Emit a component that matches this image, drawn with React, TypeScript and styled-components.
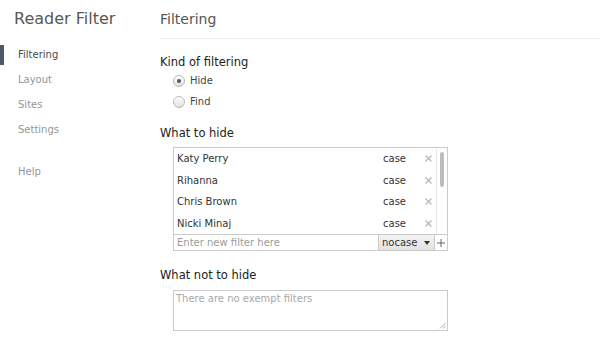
import styled, { createGlobalStyle } from "styled-components";

const GlobalStyle = createGlobalStyle`
    html, body {
        margin: 0;
        padding: 0;
        background: #fff;
    }
    body {
        font-family: "DejaVu Sans", "Open Sans", sans-serif;
        font-size: 10px;
        color: #333;
    }
`;

const filters = [
    { text: "Katy Perry", mode: "case" },
    { text: "Rihanna", mode: "case" },
    { text: "Chris Brown", mode: "case" },
    { text: "Nicki Minaj", mode: "case" },
];

const Page = styled.div`
    display: flex;
    width: 600px;
    height: 342px;
    overflow: hidden;
`;

const Sidebar = styled.nav`
    width: 160px;
    flex-shrink: 0;
    padding-top: 9px;
`;

const AppTitle = styled.h1`
    margin: 0 0 0 14px;
    font-size: 16px;
    font-weight: normal;
    color: #585858;
    line-height: 20px;
`;

const NavList = styled.ul`
    list-style: none;
    margin: 13px 0 0;
    padding: 0;
`;

const NavItem = styled.li<{ $active?: boolean; $gap?: boolean }>`
    position: relative;
    padding-left: 18px;
    height: 25px;
    line-height: 25px;
    margin-top: ${(p) => (p.$gap ? "17px" : "0")};
    color: ${(p) => (p.$active ? "#4a4a4a" : "#959595")};

    &::before {
        content: "";
        display: ${(p) => (p.$active ? "block" : "none")};
        position: absolute;
        left: 0;
        top: 3px;
        width: 4px;
        height: 20px;
        background: #4f5966;
    }
`;

const Main = styled.main`
    flex: 1;
    padding-top: 9px;
`;

const PageHeader = styled.h2`
    margin: 0;
    font-size: 14px;
    font-weight: normal;
    color: #555;
    line-height: 20px;
    padding-bottom: 9px;
    border-bottom: 1px solid #eeeeee;
`;

const Section = styled.section<{ $space: number }>`
    margin-top: ${(p) => p.$space}px;
`;

const SectionTitle = styled.h3<{ $below: number }>`
    margin: 0 0 ${(p) => p.$below}px;
    font-size: 11.5px;
    font-weight: normal;
    color: #222;
    line-height: 14px;
`;

const RadioRow = styled.label`
    display: flex;
    align-items: center;
    gap: 5px;
    margin-left: 13px;
    height: 21px;
    color: #444;
`;

const Radio = styled.span<{ $checked?: boolean }>`
    width: 10px;
    height: 10px;
    border-radius: 50%;
    border: 1px solid #b8b8b8;
    background: linear-gradient(#ffffff, #e2e2e2);
    display: flex;
    align-items: center;
    justify-content: center;

    &::after {
        content: "";
        display: ${(p) => (p.$checked ? "block" : "none")};
        width: 4px;
        height: 4px;
        border-radius: 50%;
        background: #555;
    }
`;

const ListBox = styled.div`
    margin-left: 13px;
    width: 273px;
    border: 1px solid #cacaca;
`;

const ListBody = styled.div`
    display: flex;
    height: 86px;
    overflow: hidden;
`;

const Rows = styled.div`
    flex: 1;
`;

const Row = styled.div`
    display: flex;
    align-items: center;
    height: 21.5px;
    padding-left: 3px;
    color: #333;
`;

const RowText = styled.span`
    flex: 1;
`;

const RowMode = styled.span`
    width: 37px;
    padding-left: 2px;
`;

const RemoveBtn = styled.span`
    width: 16px;
    display: flex;
    justify-content: center;
`;

const Scrollbar = styled.div`
    width: 11px;
    border-left: 1px solid #e8e8e8;
    padding: 4px 0 0 3px;
    box-sizing: border-box;
`;

const Thumb = styled.div`
    width: 4px;
    height: 35px;
    border-radius: 2px;
    background: #bdbdbd;
`;

const AddRow = styled.div`
    display: flex;
    height: 15px;
    border-top: 1px solid #cacaca;
`;

const NewInput = styled.div`
    flex: 1;
    color: #9a9a9a;
    padding-left: 3px;
    line-height: 15px;
`;

const ModeSelect = styled.div`
    display: flex;
    align-items: center;
    justify-content: space-between;
    width: 57px;
    padding: 0 4px 0 3px;
    box-sizing: border-box;
    background: linear-gradient(#f4f4f4, #e2e2e2);
    border-left: 1px solid #cacaca;
    border-right: 1px solid #cacaca;
    color: #333;
`;

const Caret = styled.span`
    width: 0;
    height: 0;
    border-left: 3px solid transparent;
    border-right: 3px solid transparent;
    border-top: 4px solid #333;
`;

const AddBtn = styled.div`
    width: 12px;
    display: flex;
    align-items: center;
    justify-content: center;
`;

const TextArea = styled.div`
    position: relative;
    margin-left: 13px;
    width: 269px;
    height: 35px;
    border: 1px solid #cacaca;
    padding: 2px;
    line-height: 12px;
    color: #a8a8a8;
`;

const Grip = styled.svg`
    position: absolute;
    right: 1px;
    bottom: 1px;
`;

function Cross() {
    return (
        <svg width="7" height="7" viewBox="0 0 7 7">
            <path d="M0.5 0.5 L6.5 6.5 M6.5 0.5 L0.5 6.5" stroke="#b3b3b3" strokeWidth="1.1" />
        </svg>
    );
}

function Plus() {
    return (
        <svg width="8" height="8" viewBox="0 0 8 8">
            <path d="M4 0 V8 M0 4 H8" stroke="#666" strokeWidth="1" />
        </svg>
    );
}

export default function App() {
    return (
        <>
            <GlobalStyle />
            <Page>
                <Sidebar>
                    <AppTitle>Reader Filter</AppTitle>
                    <NavList>
                        <NavItem $active>Filtering</NavItem>
                        <NavItem>Layout</NavItem>
                        <NavItem>Sites</NavItem>
                        <NavItem>Settings</NavItem>
                        <NavItem $gap>Help</NavItem>
                    </NavList>
                </Sidebar>
                <Main>
                    <PageHeader>Filtering</PageHeader>
                    <Section $space={16}>
                        <SectionTitle $below={1}>Kind of filtering</SectionTitle>
                        <RadioRow>
                            <Radio $checked />
                            Hide
                        </RadioRow>
                        <RadioRow>
                            <Radio />
                            Find
                        </RadioRow>
                    </Section>
                    <Section $space={14}>
                        <SectionTitle $below={7}>What to hide</SectionTitle>
                        <ListBox>
                            <ListBody>
                                <Rows>
                                    {filters.map((f) => (
                                        <Row key={f.text}>
                                            <RowText>{f.text}</RowText>
                                            <RowMode>{f.mode}</RowMode>
                                            <RemoveBtn>
                                                <Cross />
                                            </RemoveBtn>
                                        </Row>
                                    ))}
                                </Rows>
                                <Scrollbar>
                                    <Thumb />
                                </Scrollbar>
                            </ListBody>
                            <AddRow>
                                <NewInput>Enter new filter here</NewInput>
                                <ModeSelect>
                                    nocase
                                    <Caret />
                                </ModeSelect>
                                <AddBtn>
                                    <Plus />
                                </AddBtn>
                            </AddRow>
                        </ListBox>
                    </Section>
                    <Section $space={17}>
                        <SectionTitle $below={8}>What not to hide</SectionTitle>
                        <TextArea>
                            There are no exempt filters
                            <Grip width="7" height="7" viewBox="0 0 7 7">
                                <path d="M6.5 1 L1 6.5 M6.5 4 L4 6.5" stroke="#999" strokeWidth="0.8" />
                            </Grip>
                        </TextArea>
                    </Section>
                </Main>
            </Page>
        </>
    );
}
